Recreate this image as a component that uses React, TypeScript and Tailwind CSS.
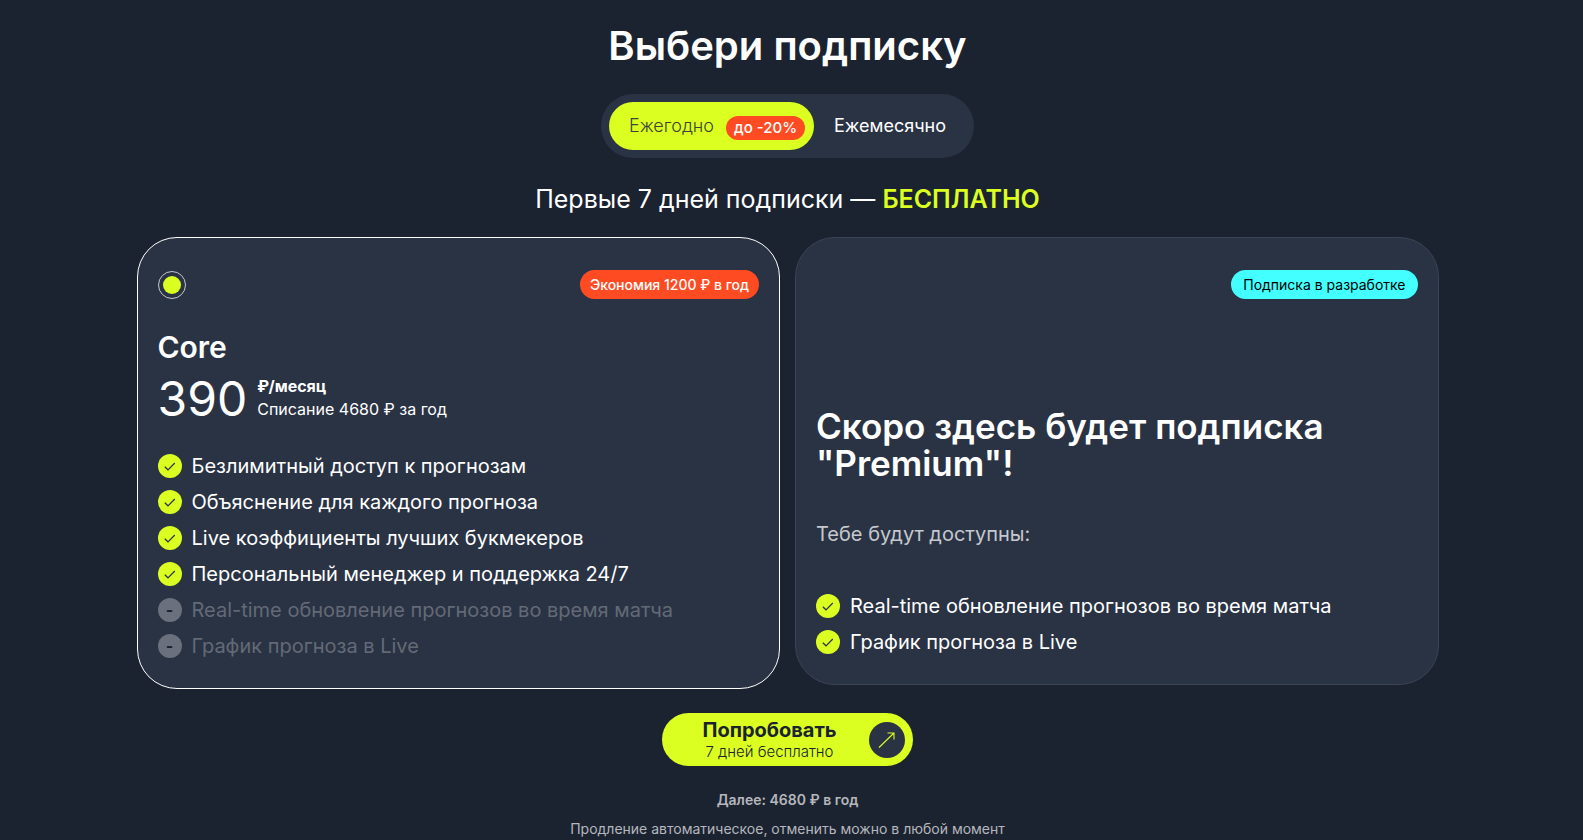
import { useState } from 'react'
import clsx from 'clsx'

interface Feature {
  text: string
  included: boolean
}

const coreFeatures: Feature[] = [
  { text: 'Безлимитный доступ к прогнозам', included: true },
  { text: 'Объяснение для каждого прогноза', included: true },
  { text: 'Live коэффициенты лучших букмекеров', included: true },
  { text: 'Персональный менеджер и поддержка 24/7', included: true },
  { text: 'Real-time обновление прогнозов во время матча', included: false },
  { text: 'График прогноза в Live', included: false },
]

const premiumFeatures: Feature[] = [
  { text: 'Real-time обновление прогнозов во время матча', included: true },
  { text: 'График прогноза в Live', included: true },
]

function FeatureList({ features }: { features: Feature[] }) {
  return (
    <ul className="space-y-3">
      {features.map((feature) => (
        <li key={feature.text} className="flex h-6 items-center gap-[10px]">
          <span
            className={clsx(
              'flex h-6 w-6 shrink-0 items-center justify-center rounded-full',
              feature.included ? 'bg-[#daff21]' : 'bg-[#6a707c]',
            )}
          >
            {feature.included ? (
              <svg className="h-6 w-6" viewBox="0 0 24 24" fill="none" stroke="#2a3344" strokeWidth="1.2">
                <path d="M6.8 12.7l3.2 3.1L16.8 9" />
              </svg>
            ) : (
              <span className="text-base font-bold leading-6 text-[#1c2330]">-</span>
            )}
          </span>
          <span className={clsx('text-xl leading-6', feature.included ? 'text-white' : 'text-[#636a76]')}>
            {feature.text}
          </span>
        </li>
      ))}
    </ul>
  )
}

export default function App() {
  const [period, setPeriod] = useState<'year' | 'month'>('year')

  return (
    <main className="flex min-h-screen flex-col items-center bg-[#1c2330] pl-4 pr-6 pt-5 font-['Inter','Liberation_Sans',sans-serif] text-white">
      <h1 className="text-[40px] font-semibold leading-[52px]">Выбери подписку</h1>

      <div className="mt-[22px] flex rounded-full bg-[#2a3344] p-2">
        <button
          type="button"
          onClick={() => setPeriod('year')}
          className={clsx(
            'flex h-12 items-center gap-3 rounded-full pl-5 pr-[9px] text-lg',
            period === 'year' ? 'bg-[#daff21] font-light text-[#3c4438]' : 'text-white',
          )}
        >
          Ежегодно
          <span className="mt-1 rounded-full bg-[#ff4b22] px-2 text-[15px] font-medium leading-6 text-white">
            до -20%
          </span>
        </button>
        <button
          type="button"
          onClick={() => setPeriod('month')}
          className={clsx(
            'h-12 rounded-full px-5 text-lg',
            period === 'month' ? 'bg-[#daff21] font-light text-[#3c4438]' : 'text-white',
          )}
        >
          Ежемесячно
        </button>
      </div>

      <p className="mt-[25px] text-[25px] leading-8">
        Первые 7 дней подписки — <span className="font-semibold text-[#daff21]">БЕСПЛАТНО</span>
      </p>

      <div className="mt-[22px] grid w-full max-w-[1302px] grid-cols-2 items-start gap-[15px]">
        <section className="rounded-[40px] border border-white bg-[#2a3344] px-5 pb-[30px] pt-8">
          <div className="flex items-center justify-between">
            <input
              type="radio"
              name="plan"
              aria-label="Core"
              defaultChecked
              className="h-7 w-7 appearance-none rounded-full border border-[#c5c8ce] p-1 before:block before:h-full before:w-full before:rounded-full checked:before:bg-[#daff21]"
            />
            <span className="rounded-full bg-[#ff4b22] px-[10px] text-sm font-medium leading-[29px]">
              Экономия 1200 ₽ в год
            </span>
          </div>
          <h2 className="mt-7 text-3xl font-semibold leading-10">Core</h2>
          <div className="mt-2 flex items-start gap-[10px]">
            <span className="text-5xl leading-[48px]">390</span>
            <div className="text-base leading-[23px]">
              <p className="font-bold">₽/месяц</p>
              <p>Списание 4680 ₽ за год</p>
            </div>
          </div>
          <div className="mt-[31px]">
            <FeatureList features={coreFeatures} />
          </div>
        </section>

        <section className="rounded-[40px] border border-[#3b4455] bg-[#2a3344] px-5 pb-[30px] pt-8">
          <div className="flex justify-end">
            <span className="rounded-full bg-[#43ffff] px-3 text-sm leading-[29px] text-black">
              Подписка в разработке
            </span>
          </div>
          <h2 className="mt-[109px] text-[35px] font-semibold leading-[37px]">
            Скоро здесь будет подписка "Premium"!
          </h2>
          <p className="mt-[38px] text-xl leading-7 text-[#c5c8ce]">Тебе будут доступны:</p>
          <div className="mt-[46px]">
            <FeatureList features={premiumFeatures} />
          </div>
        </section>
      </div>

      <button
        type="button"
        className="mt-6 flex h-[53px] items-center gap-8 rounded-full bg-[#daff21] pl-10 pr-2 text-[#1c2330]"
      >
        <span className="flex flex-col items-center">
          <span className="text-xl font-bold leading-6">Попробовать</span>
          <span className="text-[15px] font-light leading-5">7 дней бесплатно</span>
        </span>
        <span className="flex h-9 w-9 items-center justify-center rounded-full bg-[#2a3344]">
          <svg className="h-9 w-9" viewBox="0 0 36 36" fill="none" stroke="#daff21" strokeWidth="1.1">
            <path d="M10 25.5L25 11M18.5 11H25v6.5" />
          </svg>
        </span>
      </button>

      <p className="mt-6 text-sm font-semibold leading-5 text-[#b4b7bd]">Далее: 4680 ₽ в год</p>
      <p className="mt-[9px] text-sm leading-5 text-[#b4b7bd]">
        Продление автоматическое, отменить можно в любой момент
      </p>
    </main>
  )
}
